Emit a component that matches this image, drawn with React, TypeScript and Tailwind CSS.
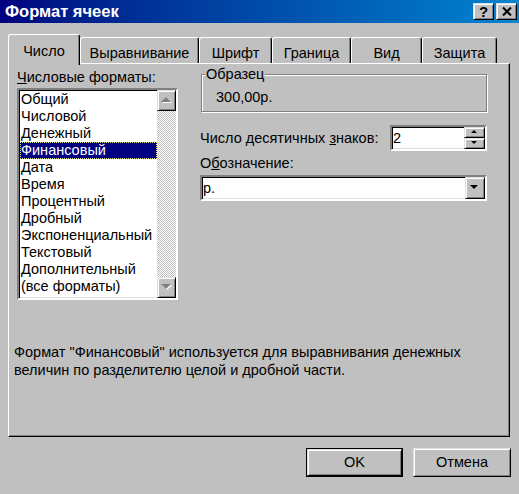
import React from "react";

const raised =
  "border border-t-[#dfdfdf] border-l-[#dfdfdf] border-r-black border-b-black shadow-[inset_1px_1px_#ffffff,inset_-1px_-1px_#808080] bg-[#c0c0c0]";
const sunken =
  "border-2 border-t-[#808080] border-l-[#808080] border-r-white border-b-white shadow-[inset_1px_1px_#000000,inset_-1px_-1px_#dfdfdf]";

const formats = [
  "Общий",
  "Числовой",
  "Денежный",
  "Финансовый",
  "Дата",
  "Время",
  "Процентный",
  "Дробный",
  "Экспоненциальный",
  "Текстовый",
  "Дополнительный",
  "(все форматы)",
];

const tabs = ["Выравнивание", "Шрифт", "Граница", "Вид", "Защита"];
const tabWidths = ["w-[119px]", "w-[73px]", "w-[79px]", "w-[71px]", "w-[75px]"];

// треугольная стрелка; size = полуширина
function Arrow({ dir, size, disabled }: { dir: "up" | "down"; size: number; disabled?: boolean }) {
  const w = size * 2 + 2;
  const h = size + 2;
  const tri = (dx: number, dy: number) =>
    dir === "up"
      ? `${dx},${size + dy} ${size + dx},${dy} ${size * 2 + dx},${size + dy}`
      : `${dx},${dy} ${size + dx},${size + dy} ${size * 2 + dx},${dy}`;
  return (
    <svg width={w} height={h} viewBox={`0 0 ${w} ${h}`}>
      {disabled && <polygon points={tri(1, 1)} fill="#ffffff" />}
      <polygon points={tri(0, 0)} fill={disabled ? "#808080" : "#000000"} />
    </svg>
  );
}

function App() {
  return (
    <div className="w-[519px] h-[494px] bg-[#c0c0c0] flex flex-col overflow-hidden font-['Liberation_Sans',Arial,sans-serif] text-[14.5px] text-black">
      {/* заголовок */}
      <div className="h-[23px] flex items-center justify-between pl-[5px] pr-[2px] bg-linear-to-r from-[#000080] to-[#1084d0]">
        <span className="text-white font-bold text-[16.5px] leading-none">Формат ячеек</span>
        <div className="flex gap-[2px]">
          <button className={`${raised} w-[21px] h-[17px] flex items-center justify-center`}>
            <span className="font-bold text-[15px] leading-none">?</span>
          </button>
          <button className={`${raised} w-[21px] h-[17px] flex items-center justify-center`}>
            <svg width="10" height="9" viewBox="0 0 10 9">
              <path d="M1 0.5 L9 8.5 M9 0.5 L1 8.5" stroke="#000" strokeWidth="2" />
            </svg>
          </button>
        </div>
      </div>

      <div className="flex-1 flex flex-col pl-[8px] pt-[11px]">
        {/* вкладки */}
        <div className="flex items-end h-[29px] relative z-10">
          <div className="w-[72px] h-[31px] -mb-[2px] bg-[#c0c0c0] border-t border-l border-white border-r border-r-black shadow-[inset_-1px_0_#808080] rounded-t-[3px] flex justify-center pt-[6px]">
            Число
          </div>
          {tabs.map((t, i) => (
            <div
              key={t}
              className={`${tabWidths[i]} h-[26px] border-t border-l border-white border-r border-r-black shadow-[inset_-1px_0_#808080] rounded-t-[3px] flex justify-center pt-[5px]`}
            >
              {t}
            </div>
          ))}
        </div>

        {/* панель */}
        <div className="w-[502px] h-[374px] border-t border-l border-white border-r border-b border-r-black border-b-black shadow-[inset_-1px_-1px_#808080] flex flex-col">
          <div className="flex pl-[8px] pt-[5px] gap-[22px]">
            <div className="w-[161px] flex flex-col">
              <div className="leading-[17px]">
                <u>Ч</u>исловые форматы:
              </div>
              <div className={`${sunken} mt-[2px] h-[212px] bg-white flex`}>
                <div className="flex-1 pt-[1px] pl-[1px]">
                  {formats.map((f) =>
                    f === "Финансовый" ? (
                      <div
                        key={f}
                        className="h-[17px] leading-[15px] bg-[#000080] text-white border border-dotted border-[#e8e870]"
                      >
                        {f}
                      </div>
                    ) : (
                      <div key={f} className="h-[17px] leading-[17px] pl-[1px] whitespace-nowrap">
                        {f}
                      </div>
                    )
                  )}
                </div>
                <div className="w-[19px] flex flex-col bg-[repeating-conic-gradient(#c0c0c0_0_25%,#ffffff_0_50%)] bg-[length:2px_2px]">
                  <div className={`${raised} h-[21px] flex items-center justify-center`}>
                    <Arrow dir="up" size={5} disabled />
                  </div>
                  <div className="flex-1" />
                  <div className={`${raised} h-[21px] flex items-center justify-center`}>
                    <Arrow dir="down" size={5} disabled />
                  </div>
                </div>
              </div>
            </div>

            <div className="w-[287px] flex flex-col">
              <div className="relative mt-[5px] ml-[1px] h-[38px] border border-[#808080] shadow-[inset_1px_1px_#ffffff,1px_1px_#ffffff] pl-[14px] pt-[14px] leading-[17px]">
                <span className="absolute -top-[9px] left-[3px] px-[1px] bg-[#c0c0c0] leading-[17px]">Образец</span>
                300,00р.
              </div>
              <div className="mt-[13px] flex items-center justify-between">
                <span className="leading-[17px]">
                  Число десятичных <u>з</u>наков:
                </span>
                <div className={`${sunken} w-[97px] h-[26px] bg-white flex items-center`}>
                  <span className="flex-1 pl-[1px] leading-[17px]">2</span>
                  <div className="w-[21px] h-full flex flex-col">
                    <div className={`${raised} flex-1 flex items-center justify-center`}>
                      <Arrow dir="up" size={3} />
                    </div>
                    <div className={`${raised} flex-1 flex items-center justify-center`}>
                      <Arrow dir="down" size={3} />
                    </div>
                  </div>
                </div>
              </div>
              <div className="mt-[4px] leading-[17px]">
                О<u>б</u>означение:
              </div>
              <div className={`${sunken} mt-[3px] h-[26px] bg-white flex items-center`}>
                <span className="flex-1 pl-[1px] leading-[17px]">р.</span>
                <div className={`${raised} w-[20px] h-full flex items-center justify-center`}>
                  <Arrow dir="down" size={4} />
                </div>
              </div>
            </div>
          </div>

          <div className="mt-[43px] pl-[5px] leading-[18px]">
            Формат "Финансовый" используется для выравнивания денежных
            <br />
            величин по разделителю целой и дробной части.
          </div>
        </div>

        {/* кнопки */}
        <div className="w-[503px] mt-[11px] flex justify-end gap-[10px]">
          <button className="w-[97px] h-[29px] border border-black p-0">
            <div className={`${raised} w-full h-full flex items-center justify-center`}>OK</div>
          </button>
          <button className={`${raised} w-[98px] h-[29px] flex items-center justify-center`}>Отмена</button>
        </div>
      </div>
    </div>
  );
}

export default App;
